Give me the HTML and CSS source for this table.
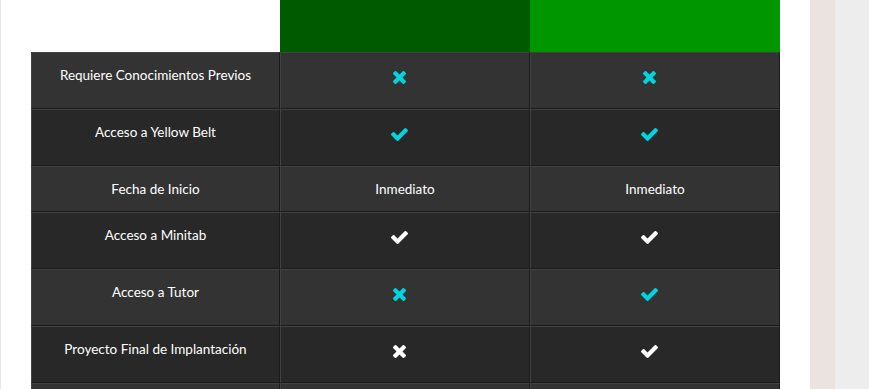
FILE: index.html
```html
<!DOCTYPE html>
<html lang="es">
<head>
<meta charset="utf-8">
<title>Comparativa</title>
<link rel="stylesheet" href="styles.css">
</head>
<body>
<div class="page">
  <main class="main">
    <table class="compare">
      <colgroup><col class="c1"><col class="c2"><col class="c3"></colgroup>
      <thead>
        <tr class="head">
          <th class="blank"></th>
          <th class="plan dark"></th>
          <th class="plan bright"></th>
        </tr>
      </thead>
      <tbody>
        <tr class="tall odd">
          <td class="label">Requiere Conocimientos Previos</td>
          <td><svg class="ic x cyan" viewBox="110 366 1188 1188"><path d="M1298 1322q0 40-28 68l-136 136q-28 28-68 28t-68-28l-294-294-294 294q-28 28-68 28t-68-28l-136-136q-28-28-28-68t28-68l294-294-294-294q-28-28-28-68t28-68l136-136q28-28 68-28t68 28l294 294 294-294q28-28 68-28t68 28l136 136q28 28 28 68t-28 68l-294 294 294 294q28 28 28 68z"/></svg></td>
          <td><svg class="ic x cyan" viewBox="110 366 1188 1188"><path d="M1298 1322q0 40-28 68l-136 136q-28 28-68 28t-68-28l-294-294-294 294q-28 28-68 28t-68-28l-136-136q-28-28-28-68t28-68l294-294-294-294q-28-28-28-68t28-68l136-136q28-28 68-28t68 28l294 294 294-294q28-28 68-28t68 28l136 136q28 28 28 68t-28 68l-294 294 294 294q28 28 28 68z"/></svg></td>
        </tr>
        <tr class="tall even">
          <td class="label">Acceso a Yellow Belt</td>
          <td><svg class="ic ok cyan" viewBox="121 334 1550 1188"><path d="M1671 566q0 40-28 68l-724 724-136 136q-28 28-68 28t-68-28l-136-136-362-362q-28-28-28-68t28-68l136-136q28-28 68-28t68 28l294 295 656-657q28-28 68-28t68 28l136 136q28 28 28 68z"/></svg></td>
          <td><svg class="ic ok cyan" viewBox="121 334 1550 1188"><path d="M1671 566q0 40-28 68l-724 724-136 136q-28 28-68 28t-68-28l-136-136-362-362q-28-28-28-68t28-68l136-136q28-28 68-28t68 28l294 295 656-657q28-28 68-28t68 28l136 136q28 28 28 68z"/></svg></td>
        </tr>
        <tr class="short odd">
          <td class="label">Fecha de Inicio</td>
          <td>Inmediato</td>
          <td>Inmediato</td>
        </tr>
        <tr class="tall even">
          <td class="label">Acceso a Minitab</td>
          <td><svg class="ic ok white" viewBox="121 334 1550 1188"><path d="M1671 566q0 40-28 68l-724 724-136 136q-28 28-68 28t-68-28l-136-136-362-362q-28-28-28-68t28-68l136-136q28-28 68-28t68 28l294 295 656-657q28-28 68-28t68 28l136 136q28 28 28 68z"/></svg></td>
          <td><svg class="ic ok white" viewBox="121 334 1550 1188"><path d="M1671 566q0 40-28 68l-724 724-136 136q-28 28-68 28t-68-28l-136-136-362-362q-28-28-28-68t28-68l136-136q28-28 68-28t68 28l294 295 656-657q28-28 68-28t68 28l136 136q28 28 28 68z"/></svg></td>
        </tr>
        <tr class="tall odd">
          <td class="label">Acceso a Tutor</td>
          <td><svg class="ic x cyan" viewBox="110 366 1188 1188"><path d="M1298 1322q0 40-28 68l-136 136q-28 28-68 28t-68-28l-294-294-294 294q-28 28-68 28t-68-28l-136-136q-28-28-28-68t28-68l294-294-294-294q-28-28-28-68t28-68l136-136q28-28 68-28t68 28l294 294 294-294q28-28 68-28t68 28l136 136q28 28 28 68t-28 68l-294 294 294 294q28 28 28 68z"/></svg></td>
          <td><svg class="ic ok cyan" viewBox="121 334 1550 1188"><path d="M1671 566q0 40-28 68l-724 724-136 136q-28 28-68 28t-68-28l-136-136-362-362q-28-28-28-68t28-68l136-136q28-28 68-28t68 28l294 295 656-657q28-28 68-28t68 28l136 136q28 28 28 68z"/></svg></td>
        </tr>
        <tr class="tall even">
          <td class="label">Proyecto Final de Implantación</td>
          <td><svg class="ic x white" viewBox="110 366 1188 1188"><path d="M1298 1322q0 40-28 68l-136 136q-28 28-68 28t-68-28l-294-294-294 294q-28 28-68 28t-68-28l-136-136q-28-28-28-68t28-68l294-294-294-294q-28-28-28-68t28-68l136-136q28-28 68-28t68 28l294 294 294-294q28-28 68-28t68 28l136 136q28 28 28 68t-28 68l-294 294 294 294q28 28 28 68z"/></svg></td>
          <td><svg class="ic ok white" viewBox="121 334 1550 1188"><path d="M1671 566q0 40-28 68l-724 724-136 136q-28 28-68 28t-68-28l-136-136-362-362q-28-28-28-68t28-68l136-136q28-28 68-28t68 28l294 295 656-657q28-28 68-28t68 28l136 136q28 28 28 68z"/></svg></td>
        </tr>
        <tr class="tall odd">
          <td class="label"></td>
          <td></td>
          <td></td>
        </tr>
      </tbody>
    </table>
  </main>
  <div class="side side-a"></div>
  <div class="side side-b"></div>
</div>
</body>
</html>
```
FILE: styles.css
```css
html, body {
  margin: 0;
  padding: 0;
  background: #ffffff;
  overflow: hidden;
}
body {
  font-family: Lato, "Open Sans", sans-serif;
  font-size: 13.5px;
  color: #ffffff;
}
.page {
  display: flex;
  height: 389px;
  overflow: hidden;
}
.main {
  flex: 0 0 749px;
  border-left: 1px solid #ebe3e0;
  padding: 0 30px 0 30px;
  background: #ffffff;
}
.side-a {
  flex: 0 0 25px;
  background: #ebe3df;
}
.side-b {
  flex: 1 1 auto;
  background: #eeedee;
}
.compare {
  width: 749px;
  table-layout: fixed;
  border-collapse: separate;
  border-spacing: 0;
}
.c1 { width: 249px; }
.c2 { width: 250px; }
.c3 { width: 250px; }
.head th {
  height: 52px;
  padding: 0;
}
.blank { background: #ffffff; }
.dark { background: #005a00; }
.bright { background: #009600; }
.compare td {
  border-top: 1px solid #424242;
  border-left: 1px solid #424242;
  border-bottom: 1px solid #1a1a1a;
  border-right: 1px solid #1a1a1a;
  padding: 12px 10px 0;
  line-height: 20px;
  text-align: center;
  vertical-align: top;
  box-sizing: border-box;
}
.odd td { background: #333333; }
.even td { background: #282828; }
.tall td { height: 57px; }
.short td { height: 46px; }
.ic {
  display: inline-block;
  vertical-align: top;
  margin-top: 6px;
  margin-right: 12px;
}
.x { width: 13px; height: 13px; }
.ok { width: 17px; height: 13px; }
.cyan { fill: #00d4de; }
.white { fill: #ffffff; }
```
